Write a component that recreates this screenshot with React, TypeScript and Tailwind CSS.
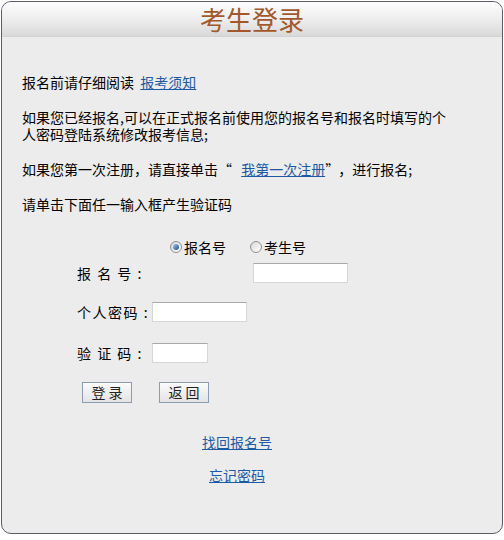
import React, { useState } from 'react';

const font = { fontFamily: '"Noto Sans CJK SC", "Noto Sans", sans-serif' };

const Radio: React.FC<{ checked: boolean; label: string; onClick: () => void }> = ({ checked, label, onClick }) => (
  <label className="flex items-center cursor-pointer" onClick={onClick}>
    <span className="w-[12px] h-[12px] rounded-full border border-[#8f8f8f] bg-gradient-to-br from-[#d8d8d8] to-[#ffffff] flex items-center justify-center mr-[2px]">
      {checked && <span className="w-[6px] h-[6px] rounded-full bg-gradient-to-br from-[#9ec8f0] to-[#1a4f8c]" />}
    </span>
    <span>{label}</span>
  </label>
);

const TextBox: React.FC<{ w: string }> = ({ w }) => (
  <input
    type="text"
    className={`${w} h-[20px] bg-white border border-[#d6d6d6] border-t-[#a9a9a9] outline-none px-1 text-[13px]`}
  />
);

const Btn: React.FC<{ label: string }> = ({ label }) => (
  <button className="w-[50px] h-[21px] border border-[#8b9bb3] bg-gradient-to-b from-[#fbfbfb] to-[#e4e4e4] text-[14px] leading-[19px] text-[#222]">
    {label}
  </button>
);

const App: React.FC = () => {
  const [mode, setMode] = useState<'bmh' | 'ksh'>('bmh');

  return (
    <div className="w-[504px] h-[540px] bg-white pt-px pl-px text-[14px] text-black" style={font}>
      <div className="w-[502px] h-[533px] rounded-[10px] border border-[#585d68] bg-[#ececec] overflow-hidden flex flex-col">
        <div className="h-[35px] bg-gradient-to-b from-[#fdfdfd] via-[#eeeeee] to-[#d9d9d9] border-b border-[#d2d2d2] flex justify-center items-center">
          <span className="text-[26px] leading-[30px] text-[#a3582c]">考生登录</span>
        </div>

        <div className="pt-[37px] pl-[20px] pr-[20px] leading-[17px]">
          <p>
            报名前请仔细阅读&nbsp;&nbsp;
            <a href="#" className="text-[#1d5aa6] underline">报考须知</a>
          </p>
          <p className="mt-[18px]">
            如果您已经报名,可以在正式报名前使用您的报名号和报名时填写的个<br />
            人密码登陆系统修改报考信息;
          </p>
          <p className="mt-[18px]">
            如果您第一次注册，请直接单击<span className="tracking-[6px]">“</span>&nbsp;
            <a href="#" className="text-[#1d5aa6] underline">我第一次注册</a>
            <span className="tracking-[6px]">”</span>，进行报名;
          </p>
          <p className="mt-[18px]">请单击下面任一输入框产生验证码</p>
        </div>

        <div className="pl-[75px] mt-[24px]">
          <div className="h-[20px] flex items-center gap-[24px] pl-[93px]">
            <Radio checked={mode === 'bmh'} label="报名号" onClick={() => setMode('bmh')} />
            <Radio checked={mode === 'ksh'} label="考生号" onClick={() => setMode('ksh')} />
          </div>

          <div className="h-[20px] mt-[6px] flex items-center">
            <span className="w-[176px] shrink-0 tracking-[1.5px] whitespace-nowrap">报&nbsp;名&nbsp;号&nbsp;:</span>
            <TextBox w="w-[95px]" />
          </div>

          <div className="h-[20px] mt-[19px] flex items-center">
            <span className="w-[75px] shrink-0 tracking-[1.5px] whitespace-nowrap">个人密码&nbsp;:</span>
            <TextBox w="w-[95px]" />
          </div>

          <div className="h-[20px] mt-[21px] flex items-center">
            <span className="w-[75px] shrink-0 tracking-[1.5px] whitespace-nowrap">验&nbsp;证&nbsp;码&nbsp;:</span>
            <TextBox w="w-[56px]" />
          </div>

          <div className="mt-[19px] pl-[5px] flex gap-[27px]">
            <Btn label="登 录" />
            <Btn label="返 回" />
          </div>
        </div>

        <div className="mt-[31px] flex flex-col items-center leading-[17px] gap-[16px] pr-[30px]">
          <a href="#" className="text-[#1d5aa6] underline">找回报名号</a>
          <a href="#" className="text-[#1d5aa6] underline">忘记密码</a>
        </div>
      </div>
    </div>
  );
};

export default App;
